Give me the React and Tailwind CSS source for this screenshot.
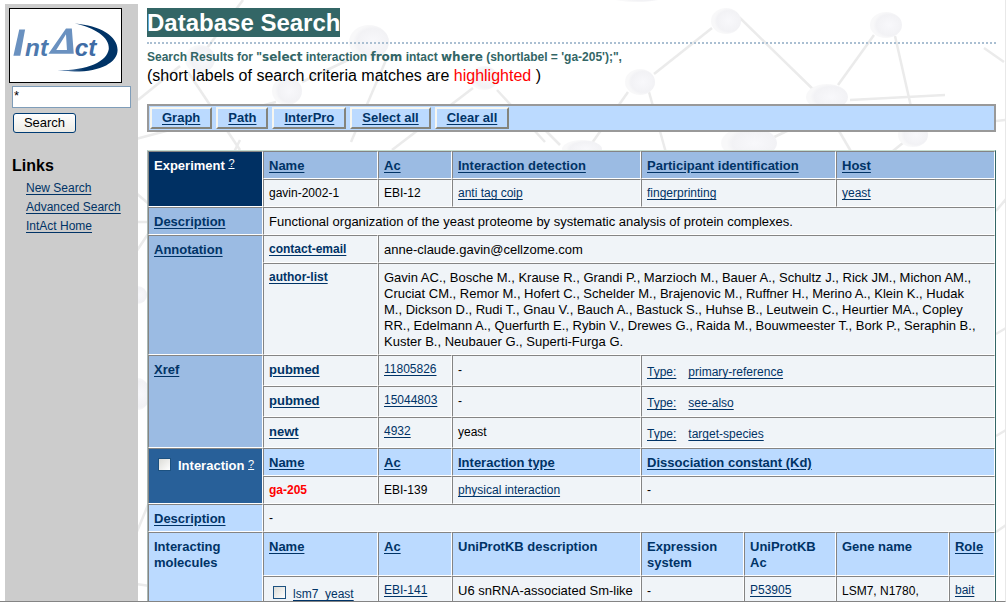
const L = ({ children, className = "" }) => (
  <a href="#" className={`text-[#003366] underline underline-offset-2 ${className}`}>{children}</a>
);

const cellBase = "border border-t-[#848484] border-l-[#848484] border-r-white border-b-white px-[5px] align-top text-left leading-4";

const Td = ({ children, className = "pt-[5px]", ...p }) => (
  <td className={`${cellBase} bg-[#f0f4f8] font-normal ${className}`} {...p}>{children}</td>
);
const Th = ({ children, light, ...p }) => (
  <th className={`${cellBase} pt-[6px] text-[13px] font-bold text-[#003366] ${light ? "bg-[#bbdaff]" : "bg-[#9bbbe3]"}`} {...p}>{children}</th>
);

const authors = "Gavin AC., Bosche M., Krause R., Grandi P., Marzioch M., Bauer A., Schultz J., Rick JM., Michon AM., Cruciat CM., Remor M., Hofert C., Schelder M., Brajenovic M., Ruffner H., Merino A., Klein K., Hudak M., Dickson D., Rudi T., Gnau V., Bauch A., Bastuck S., Huhse B., Leutwein C., Heurtier MA., Copley RR., Edelmann A., Querfurth E., Rybin V., Drewes G., Raida M., Bouwmeester T., Bork P., Seraphin B., Kuster B., Neubauer G., Superti-Furga G.";

const xrefs = [
  ["pubmed", "11805826", "-", "primary-reference"],
  ["pubmed", "15044803", "-", "see-also"],
  ["newt", "4932", "yeast", "target-species"],
];

const balls = [
  [200, 59, 15, 14], [369, 42, 20, 17], [287, 91, 15, 14], [484, 78, 14, 12], [640, 82, 15, 13],
  [726, 21, 15, 13], [886, 25, 16, 13], [827, 97, 21, 13], [913, 135, 15, 12], [749, 143, 28, 16],
  [582, 149, 20, 9], [637, -5, 30, 7], [138, 394, 12, 16], [138, 295, 9, 9],
];
const sticks = [
  [243, 0, 207, 48], [348, 60, 302, 82], [386, 60, 351, 142], [276, 102, 132, 140], [180, 66, 138, 100],
  [188, 72, 240, 150], [473, 88, 392, 150], [497, 90, 545, 142], [712, 28, 654, 74], [739, 17, 822, 98],
  [874, 35, 838, 85], [895, 36, 914, 120], [850, 100, 945, 95], [984, 48, 1004, 62], [628, 92, 592, 143],
  [649, 92, 668, 160], [766, 141, 812, 119], [832, 119, 856, 160], [909, 138, 888, 155], [996, 121, 1006, 120],
  [136, 193, 150, 205], [136, 222, 150, 222], [150, 231, 136, 252], [136, 534, 150, 500], [136, 584, 150, 586],
  [240, 140, 230, 160], [560, 145, 540, 125], [996, 211, 1006, 199], [996, 334, 1006, 328], [996, 436, 1006, 430],
  [996, 532, 1006, 525],
];

function Molecules() {
  return (
    <svg aria-hidden="true" className="absolute left-0 top-0 -z-10" width="1006" height="602" viewBox="0 0 1006 602">
      <defs>
        <radialGradient id="ball" cx=".6" cy=".5">
          <stop offset="0" stopColor="#f8f8fb" />
          <stop offset=".8" stopColor="#f2f2f5" />
          <stop offset="1" stopColor="#f8f8f9" />
        </radialGradient>
      </defs>
      <g stroke="#ebebeb" strokeWidth="2.5">
        {sticks.map(([a, b, c, d], i) => <line key={i} x1={a} y1={b} x2={c} y2={d} />)}
      </g>
      {balls.map(([x, y, rx, ry], i) => <ellipse key={i} cx={x} cy={y} rx={rx} ry={ry} fill="url(#ball)" />)}
    </svg>
  );
}

function Logo() {
  return (
    <svg role="img" aria-label="IntAct" className="ml-1 mt-1 block border border-black bg-white" width="113" height="75" viewBox="0 0 113 75">
      <defs>
        <linearGradient id="swoosh" x1="0" x2="1"><stop offset="0" stopColor="#7f9fc6" /><stop offset=".45" stopColor="#003366" /></linearGradient>
      </defs>
      <path d="M66 15C92 17 110 28 110 42C110 57 86 68 48 63C80 63 99 54 101 41C102 29 86 19 66 15Z" fill="url(#swoosh)" />
      <path d="M9 21h6l-5 27H3Z" fill="#6a91c0" />
      <path fillRule="evenodd" d="M39 46L57 20h6l2 26ZM47 42h11l-1-16Z" fill="#6a91c0" />
      <text x="15" y="48" fill="#4d79ae" fontFamily="Liberation Sans" fontStyle="italic" fontWeight="bold" fontSize="25">nt</text>
      <text x="66" y="48" fill="#3f6ca5" fontFamily="Liberation Sans" fontStyle="italic" fontWeight="bold" fontSize="25">ct</text>
    </svg>
  );
}

const Keyword = ({ children }) => <span className="font-['DejaVu_Sans',sans-serif]">{children}</span>;

export default function App() {
  return (
    <div className="relative isolate flex h-screen overflow-hidden border-b border-r border-b-[#848484] border-r-[#e8e8e8] bg-white font-['Liberation_Sans',Arial,sans-serif] text-[12px] text-black">
      <Molecules />
      <aside className="ml-[5px] mt-1 w-[133px] shrink-0 bg-[#cccccc]">
        <Logo />
        <form className="ml-[7px] mt-[3px]" onSubmit={(e) => e.preventDefault()}>
          <input aria-label="Search term" defaultValue="*" className="block h-[22px] w-[119px] border border-[#7f9db9] bg-white px-px pb-1 text-[13px] outline-none" />
          <button className="ml-px mt-[5px] block h-5 w-[63px] rounded-[3px] border border-[#003c74] bg-linear-to-b from-white to-[#ecebe5] text-[13px] leading-4">Search</button>
        </form>
        <h2 className="ml-[7px] mt-[23px] text-base font-bold leading-5">Links</h2>
        <nav className="ml-[21px] mt-[3px] flex flex-col items-start leading-[19px]">
          <L>New Search</L>
          <L>Advanced Search</L>
          <L>IntAct Home</L>
        </nav>
      </aside>
      <main className="min-w-0 flex-1 pl-[9px] pr-[9px] pt-2">
        <h1 className="w-fit bg-[#336666] text-[24px] font-bold leading-[29px] text-white">Database Search</h1>
        <div className="mt-[5px] border-t-2 border-dotted border-[#aabfd2]" />
        <p className="mt-[5px] h-[17px] whitespace-nowrap text-[12px] font-bold leading-4 text-[#336666]">
          Search Results for "<Keyword>select</Keyword> interaction <Keyword>from</Keyword> intact <Keyword>where</Keyword> (shortlabel = 'ga-205');",
        </p>
        <p className="text-[16px] leading-5">(short labels of search criteria matches are <span className="text-[#ff0000]">highlighted</span> )</p>
        <div className="mt-[18px] flex h-7 gap-1 border-2 border-[#999999] bg-[#bbdaff] p-px text-[13px] font-bold">
          {["Graph", "Path", "InterPro", "Select all", "Clear all"].map((t) => (
            <button key={t} className="border-2 border-b-[#84847c] border-l-[#f6f6f0] border-r-[#84847c] border-t-[#f6f6f0] px-[10px] leading-4 text-[#003366] underline underline-offset-2">{t}</button>
          ))}
        </div>
        <table className="mt-[18px] w-full table-fixed border-separate border-spacing-0 border border-b-0 border-l-[#aab8b4] border-r-[#336666] border-t-[#c5dcd0]">
          <colgroup>
            <col className="w-[115px]" /><col className="w-[115px]" /><col className="w-[74px]" /><col className="w-[189px]" />
            <col className="w-[103px]" /><col className="w-[92px]" /><col /><col className="w-[46px]" />
          </colgroup>
          <tbody>
            <tr className="h-7">
              <th rowSpan={2} className={`${cellBase} bg-[#003063] pt-[6px] text-[13px] text-white`}>Experiment <a href="#" className="align-[3px] text-[11px] font-normal leading-none underline">?</a></th>
              <Th><L>Name</L></Th><Th><L>Ac</L></Th><Th><L>Interaction detection</L></Th>
              <Th colSpan={2}><L>Participant identification</L></Th><Th colSpan={2}><L>Host</L></Th>
            </tr>
            <tr className="h-7">
              <Td>gavin-2002-1</Td><Td>EBI-12</Td><Td><L>anti tag coip</L></Td>
              <Td colSpan={2}><L>fingerprinting</L></Td><Td colSpan={2}><L>yeast</L></Td>
            </tr>
            <tr className="h-7"><Th><L>Description</L></Th><Td colSpan={7} className="pt-[6px] text-[13px]">Functional organization of the yeast proteome by systematic analysis of protein complexes.</Td></tr>
            <tr className="h-7">
              <Th rowSpan={2}><L>Annotation</L></Th><Td><L className="font-bold">contact-email</L></Td>
              <Td colSpan={6} className="pt-[6px] text-[13px]">anne-claude.gavin@cellzome.com</Td>
            </tr>
            <tr className="h-[92px]"><Td><L className="font-bold">author-list</L></Td><Td colSpan={6} className="pt-[6px] text-[13px]"><p className="pr-2">{authors}</p></Td></tr>
            {xrefs.map(([db, id, name, type], i) => (
              <tr key={id} className="h-[31px]">
                {i === 0 && <Th rowSpan={3}><L>Xref</L></Th>}
                <Td className="pt-[6px] text-[13px]"><L className="font-bold">{db}</L></Td><Td><L>{id}</L></Td><Td className="pt-[6px]">{name}</Td>
                <Td colSpan={4} className="pt-2"><span className="flex gap-3"><L>Type:</L><L>{type}</L></span></Td>
              </tr>
            ))}
            <tr className="h-7">
              <th rowSpan={2} className={`${cellBase} bg-[#286099] pt-[6px] text-[13px] text-white`}>
                <label className="flex items-start pl-1 pt-[3px]">
                  <input type="checkbox" className="mr-[7px] size-[13px] appearance-none border border-[#1c5180] bg-linear-to-br from-[#dcdcd7] to-white" />
                  Interaction&nbsp;<a href="#" className="text-[11px] font-normal leading-3 underline">?</a>
                </label>
              </th>
              <Th light><L>Name</L></Th><Th light><L>Ac</L></Th><Th light><L>Interaction type</L></Th>
              <Th light colSpan={4}><L>Dissociation constant (Kd)</L></Th>
            </tr>
            <tr className="h-7">
              <Td><b className="text-[#ff0000]">ga-205</b></Td><Td>EBI-139</Td><Td><L>physical interaction</L></Td><Td colSpan={4}>-</Td>
            </tr>
            <tr className="h-7"><Th light><L>Description</L></Th><Td colSpan={7}>-</Td></tr>
            <tr className="h-11">
              <Th light rowSpan={2}>Interacting molecules</Th>
              <Th light><L>Name</L></Th><Th light><L>Ac</L></Th><Th light>UniProtKB description</Th><Th light>Expression system</Th>
              <Th light>UniProtKB Ac</Th><Th light>Gene name</Th><Th light><L>Role</L></Th>
            </tr>
            <tr className="h-12">
              <Td>
                <span className="flex items-start pl-1 pt-1">
                  <input aria-label="Select lsm7_yeast" type="checkbox" className="mr-[7px] size-[13px] appearance-none border border-[#1c5180] bg-linear-to-br from-[#dcdcd7] to-white" />
                  <L>lsm7_yeast</L>
                </span>
              </Td>
              <Td><L>EBI-141</L></Td><Td className="pt-[6px] text-[13px]">U6 snRNA-associated Sm-like</Td><Td className="pt-[6px]">-</Td><Td><L>P53905</L></Td><Td className="pt-[6px]">LSM7, N1780,</Td><Td><L>bait</L></Td>
            </tr>
          </tbody>
        </table>
      </main>
    </div>
  );
}
